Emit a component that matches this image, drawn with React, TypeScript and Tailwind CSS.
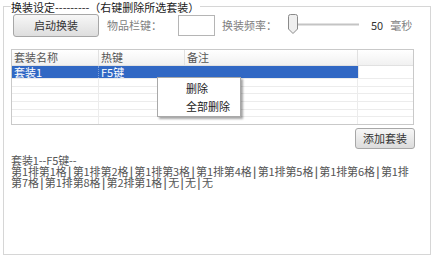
import React from "react";

const FONT = { fontFamily: '"Noto Sans CJK SC", "Noto Sans", sans-serif' };

function Sep() {
  return <span className="inline-block w-[6px] text-center font-bold">|</span>;
}

function Seg({ a, b }: { a: string; b: string }) {
  return (
    <span>
      第{a}排第{b}格
    </span>
  );
}

export default function App() {
  const rows = [0, 1, 2, 3, 4, 5];
  return (
    <div className="relative w-[434px] h-[261px] bg-white overflow-hidden text-[11px]" style={FONT}>
      <div className="pt-[6px] pl-[3px]">
        <div className="relative w-[428px] h-[249px] border border-[#d6d6d6]">
          <span className="absolute left-[7px] top-[-6px] bg-white pr-[1px] leading-[12px] text-[11px] text-[#1a1a1a]">
            换装设定---------（右键删除所选套装）
          </span>
          <div className="pl-[7px] pt-[7px] flex flex-col">
            {/* row 1 */}
            <div className="flex items-center h-[23px]">
              <button className="ml-[2px] w-[86px] h-[23px] rounded-[3px] border border-[#a7a7a7] bg-gradient-to-b from-[#f7f7f7] to-[#dedede] text-[11px] text-[#333] leading-none">
                启动换装
              </button>
              <span className="ml-[8px] w-[71px] text-[#808080]">物品栏键：</span>
              <div className="w-[37px] h-[21px] border border-[#b5b5b5] bg-white"></div>
              <span className="ml-[7px] w-[66px] text-[#808080]">换装频率：</span>
              <svg width="72" height="23" viewBox="0 0 72 23" className="block">
                <line x1="10" y1="10.5" x2="71" y2="10.5" stroke="#c4c4c4" strokeWidth="2" />
                <path d="M0.5 2.5 Q0.5 0.5 2.5 0.5 L7.5 0.5 Q9.5 0.5 9.5 2.5 L9.5 15 L5 19.5 L0.5 15 Z" fill="#efefef" stroke="#8a8a8a" />
              </svg>
              <span className="ml-[11px] text-[#333]">50</span>
              <span className="ml-[7px] text-[#808080]">毫秒</span>
            </div>
            {/* list */}
            <div className="mt-[12px] w-[403px] h-[76px] border border-[#c9c9c9] bg-white flex flex-col overflow-hidden">
              <div className="flex h-[16px] bg-gradient-to-b from-white to-[#f1f1f1] border-b border-[#e1e1e1] text-[#555] leading-[15px]">
                <div className="w-[87px] pl-[2px] border-r border-[#e1e1e1]">套装名称</div>
                <div className="w-[86px] pl-[2px] border-r border-[#e1e1e1]">热键</div>
                <div className="w-[173px] pl-[2px] border-r border-[#e1e1e1]">备注</div>
                <div className="flex-1"></div>
              </div>
              <div className="flex h-[12px] leading-[12px]">
                <div className="w-[346px] flex bg-[#3168c4] text-white">
                  <div className="w-[87px] pl-[2px] border-r border-dotted border-[#7d9fd8]">套装1</div>
                  <div className="w-[86px] pl-[2px]">F5键</div>
                </div>
                <div className="flex-1 border-l border-[#e8e8e8]"></div>
              </div>
              {rows.map((r) => (
                <div key={r} className="flex h-[8px] border-t border-[#ececec]">
                  <div className="w-[87px] border-r border-[#ececec]"></div>
                  <div className="w-[86px]"></div>
                  <div className="w-[173px] border-r border-[#ececec]"></div>
                  <div className="flex-1"></div>
                </div>
              ))}
            </div>
            {/* add button */}
            <div className="mt-[3px] flex">
              <button className="ml-[344px] w-[60px] h-[21px] rounded-[3px] border border-[#a7a7a7] bg-gradient-to-b from-[#f7f7f7] to-[#dcdcdc] text-[11px] text-[#333] leading-none">
                添加套装
              </button>
            </div>
            {/* text */}
            <div className="mt-[6px] leading-[11px] text-[#555] whitespace-nowrap tracking-[-0.1px]">
              <div>套装1--F5键--</div>
              <div>
                <Seg a="1" b="1" />
                <Sep />
                <Seg a="1" b="2" />
                <Sep />
                <Seg a="1" b="3" />
                <Sep />
                <Seg a="1" b="4" />
                <Sep />
                <Seg a="1" b="5" />
                <Sep />
                <Seg a="1" b="6" />
                <Sep />
                第1排
              </div>
              <div>
                第7格
                <Sep />
                <Seg a="1" b="8" />
                <Sep />
                <Seg a="2" b="1" />
                <Sep />
                无
                <Sep />
                无
                <Sep />
                无
              </div>
            </div>
          </div>
        </div>
      </div>
      {/* context menu */}
      <div className="absolute left-[157px] top-[77px] w-[84px] h-[40px] bg-white border border-[#a9a9a9] shadow-[2px_2px_2px_rgba(0,0,0,0.35)] flex flex-col text-[#222] leading-[18px] pt-[1px]">
        <div className="pl-[28px]">删除</div>
        <div className="pl-[28px]">全部删除</div>
      </div>
    </div>
  );
}
